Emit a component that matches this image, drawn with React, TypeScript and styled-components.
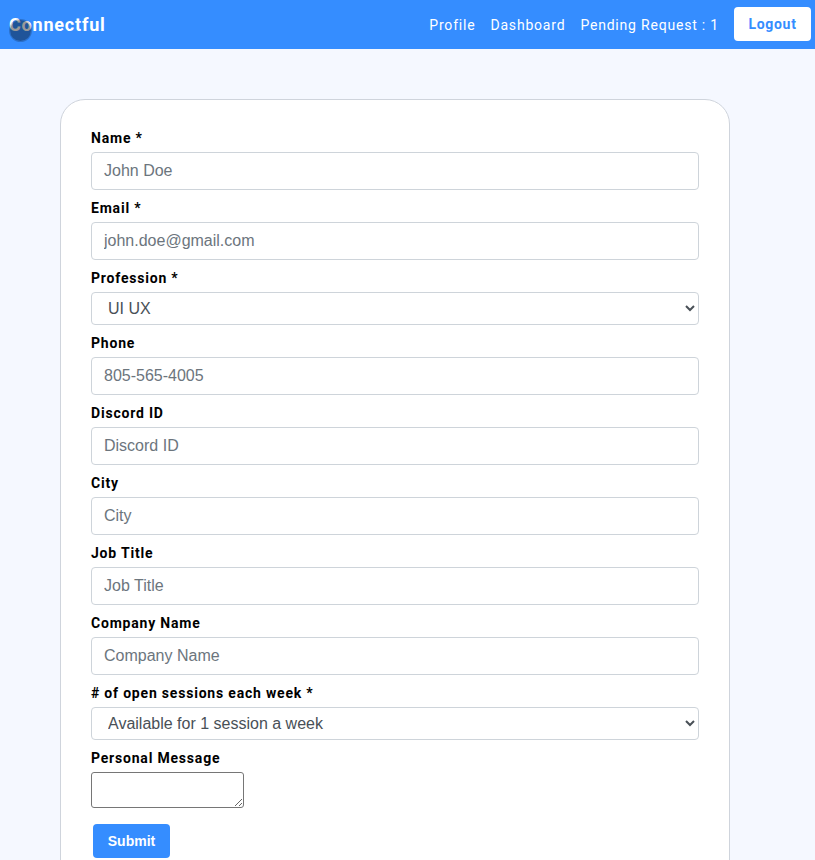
import React from "react";
import styled, { createGlobalStyle } from "styled-components";

const GlobalStyle = createGlobalStyle`
  html, body {
    margin: 0;
    height: 100%;
    overflow: hidden;
    background: #f5f8ff;
    font-family: Roboto, "Liberation Sans", sans-serif;
  }
  * {
    box-sizing: border-box;
  }
`;

const Header = styled.header`
  position: relative;
  display: flex;
  align-items: center;
  justify-content: space-between;
  height: 49px;
  padding: 0 4px 1px 9px;
  background: #358dff;
`;

const Brand = styled.a`
  font-size: 18px;
  font-weight: 700;
  letter-spacing: 0.8px;
  color: #ffffff;
  text-decoration: none;
`;

const LogoDot = styled.span`
  position: absolute;
  left: 9px;
  top: 19px;
  width: 23px;
  height: 23px;
  border-radius: 50%;
  border: 1px solid rgba(0, 0, 0, 0.2);
  background: rgba(0, 0, 0, 0.4);
  background-clip: padding-box;
`;

const Nav = styled.nav`
  display: flex;
  align-items: center;
`;

const NavLink = styled.a`
  margin: 2px 15px 0 0;
  font-size: 14px;
  letter-spacing: 0.8px;
  color: #ffffff;
  text-decoration: none;
`;

const LogoutButton = styled.button`
  width: 77px;
  height: 34px;
  padding: 0;
  border: none;
  border-radius: 4px;
  background: #ffffff;
  color: #358dff;
  font-family: inherit;
  font-size: 14px;
  font-weight: 700;
  letter-spacing: 0.7px;
`;

const Card = styled.form`
  width: 670px;
  margin: 50px 0 0 60px;
  padding: 20px 30px 60px;
  border: 1px solid #cfd4dc;
  border-radius: 25px;
  background: #ffffff;
`;

const Field = styled.div`
  display: flex;
  flex-direction: column;
`;

const Label = styled.label`
  height: 32px;
  padding-top: 10px;
  line-height: 17px;
  font-size: 14px;
  font-weight: 700;
  letter-spacing: 0.8px;
  color: #000000;
`;

const TextInput = styled.input`
  width: 100%;
  height: 38px;
  padding: 6px 12px;
  border: 1px solid #ced4da;
  border-radius: 4px;
  background: #ffffff;
  color: #495057;
  font-family: "Liberation Sans", Arial, sans-serif;
  font-size: 16px;
  outline: none;
  &::placeholder {
    color: #6c757d;
    opacity: 1;
  }
`;

const Select = styled.select`
  width: 100%;
  height: 33px;
  padding: 0 12px;
  border: 1px solid #ced4da;
  border-radius: 4px;
  background: #ffffff;
  color: #495057;
  font-family: "Liberation Sans", Arial, sans-serif;
  font-size: 16px;
  outline: none;
`;

const MessageBox = styled.textarea`
  display: block;
  width: 153px;
  height: 36px;
  border: 1px solid #767676;
  border-radius: 3px;
  background: #ffffff;
  outline: none;
`;

const SubmitButton = styled.button`
  display: block;
  width: 77px;
  height: 34px;
  margin: 16px 0 0 2px;
  padding: 0;
  border: none;
  border-radius: 4px;
  background: #358dff;
  color: #ffffff;
  font-family: "Liberation Sans", Arial, sans-serif;
  font-size: 14px;
  font-weight: 700;
`;

const inputFields = {
  top: [
    { label: "Name *", placeholder: "John Doe" },
    { label: "Email *", placeholder: "john.doe@gmail.com" },
  ],
  middle: [
    { label: "Phone", placeholder: "805-565-4005" },
    { label: "Discord ID", placeholder: "Discord ID" },
    { label: "City", placeholder: "City" },
    { label: "Job Title", placeholder: "Job Title" },
    { label: "Company Name", placeholder: "Company Name" },
  ],
};

const InputField = ({ label, placeholder }: { label: string; placeholder: string }) => (
  <Field>
    <Label>{label}</Label>
    <TextInput type="text" placeholder={placeholder} />
  </Field>
);

const App = () => (
  <>
    <GlobalStyle />
    <Header>
      <Brand href="#">Connectful</Brand>
      <LogoDot />
      <Nav>
        <NavLink href="#">Profile</NavLink>
        <NavLink href="#">Dashboard</NavLink>
        <NavLink href="#">Pending Request : 1</NavLink>
        <LogoutButton type="button">Logout</LogoutButton>
      </Nav>
    </Header>
    <Card onSubmit={(e) => e.preventDefault()}>
      {inputFields.top.map((f) => (
        <InputField key={f.label} {...f} />
      ))}
      <Field>
        <Label>Profession *</Label>
        <Select defaultValue="UI UX">
          <option>UI UX</option>
          <option>Frontend</option>
          <option>Backend</option>
        </Select>
      </Field>
      {inputFields.middle.map((f) => (
        <InputField key={f.label} {...f} />
      ))}
      <Field>
        <Label># of open sessions each week *</Label>
        <Select defaultValue="Available for 1 session a week">
          <option>Available for 1 session a week</option>
          <option>Available for 2 sessions a week</option>
        </Select>
      </Field>
      <Field>
        <Label>Personal Message</Label>
        <MessageBox />
      </Field>
      <SubmitButton type="submit">Submit</SubmitButton>
    </Card>
  </>
);

export default App;
